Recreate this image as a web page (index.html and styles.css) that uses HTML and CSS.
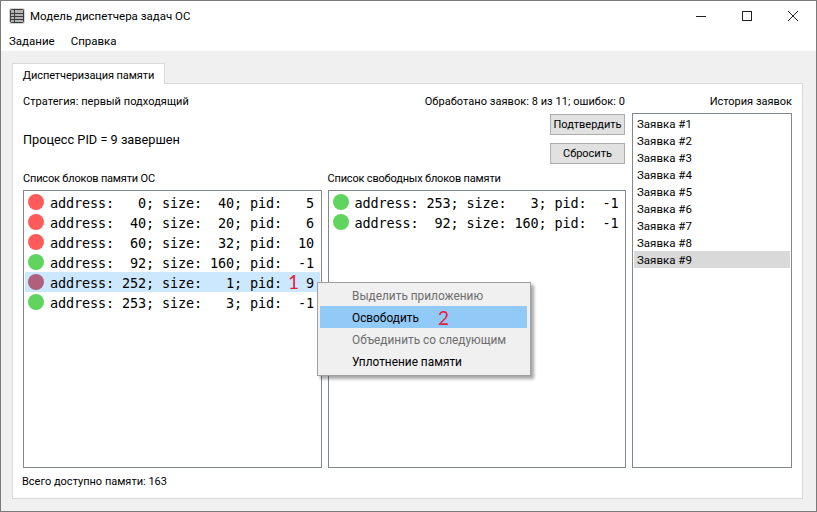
FILE: index.html
```html
<!DOCTYPE html>
<html lang="ru">
<head>
    <meta charset="UTF-8">
    <title>Модель диспетчера задач ОС</title>
    <link rel="stylesheet" href="styles.css">
</head>
<body>
    <div class="window">
        <div class="titlebar">
            <svg class="app-icon" width="16" height="16" viewBox="0 0 16 16">
                <rect x="0" y="0" width="16" height="16" rx="2" fill="#d4d4d4"/>
                <rect x="1.5" y="1.5" width="13" height="13" rx="1" fill="#b4b4b4" stroke="#3c3c3c"/>
                <path d="M2 5.5h12M2 8.5h12M2 11.5h12M5.5 2v12" stroke="#3c3c3c" fill="none"/>
            </svg>
            <span class="title">Модель диспетчера задач ОС</span>
            <div class="controls">
                <div class="control">
                    <svg width="12" height="12" viewBox="0 0 12 12"><path d="M1 6.5h10" stroke="#222" fill="none"/></svg>
                </div>
                <div class="control">
                    <svg width="12" height="12" viewBox="0 0 12 12"><rect x="1.5" y="1.5" width="9" height="9" stroke="#222" fill="none"/></svg>
                </div>
                <div class="control">
                    <svg width="12" height="12" viewBox="0 0 12 12"><path d="M1 1l10 10M11 1L1 11" stroke="#222" fill="none"/></svg>
                </div>
            </div>
        </div>

        <div class="menubar">
            <span class="menu-item">Задание</span>
            <span class="menu-item">Справка</span>
        </div>

        <div class="content">
            <div class="tab">Диспетчеризация памяти</div>
            <div class="pane">
                <div class="main">
                    <div class="left">
                        <div class="label-row">
                            <span>Стратегия: первый подходящий</span>
                            <span>Обработано заявок: 8 из 11; ошибок: 0</span>
                        </div>
                        <div class="message-row">
                            <span class="message">Процесс PID = 9 завершен</span>
                            <div class="buttons">
                                <button class="btn">Подтвердить</button>
                                <button class="btn">Сбросить</button>
                            </div>
                        </div>
                        <div class="lists">
                            <div class="list-col">
                                <div class="list-label">Список блоков памяти ОС</div>
                                <div class="list">
                                    <div class="block"><i class="dot busy"></i><span>address:   0; size:  40; pid:   5</span></div>
                                    <div class="block"><i class="dot busy"></i><span>address:  40; size:  20; pid:   6</span></div>
                                    <div class="block"><i class="dot busy"></i><span>address:  60; size:  32; pid:  10</span></div>
                                    <div class="block"><i class="dot free"></i><span>address:  92; size: 160; pid:  -1</span></div>
                                    <div class="block selected"><i class="dot mixed"></i><span>address: 252; size:   1; pid:   9</span><b class="mark mark-one">1</b></div>
                                    <div class="block"><i class="dot free"></i><span>address: 253; size:   3; pid:  -1</span></div>
                                </div>
                            </div>
                            <div class="list-col">
                                <div class="list-label">Список свободных блоков памяти</div>
                                <div class="list">
                                    <div class="block"><i class="dot free"></i><span>address: 253; size:   3; pid:  -1</span></div>
                                    <div class="block"><i class="dot free"></i><span>address:  92; size: 160; pid:  -1</span></div>
                                </div>
                            </div>
                        </div>
                    </div>
                    <div class="right">
                        <div class="history-label">История заявок</div>
                        <div class="history">
                            <div class="history-item">Заявка #1</div>
                            <div class="history-item">Заявка #2</div>
                            <div class="history-item">Заявка #3</div>
                            <div class="history-item">Заявка #4</div>
                            <div class="history-item">Заявка #5</div>
                            <div class="history-item">Заявка #6</div>
                            <div class="history-item">Заявка #7</div>
                            <div class="history-item">Заявка #8</div>
                            <div class="history-item current">Заявка #9</div>
                        </div>
                    </div>
                </div>
                <div class="footer">Всего доступно памяти: 163</div>

                <!-- context menu over the lists -->
                <div class="context-menu">
                    <div class="context-item disabled">Выделить приложению</div>
                    <div class="context-item active">Освободить<b class="mark mark-two">2</b></div>
                    <div class="context-item disabled">Объединить со следующим</div>
                    <div class="context-item">Уплотнение памяти</div>
                </div>
            </div>
        </div>
    </div>
</body>
</html>
```

FILE: styles.css
```css
* {
    box-sizing: border-box;
}
html, body {
    margin: 0;
    height: 100%;
    overflow: hidden;
}
body {
    font-family: Roboto, "Open Sans", sans-serif;
    font-size: 11px;
    color: #000;
    background-color: #fff;
}
.window {
    height: 512px;
    display: flex;
    flex-direction: column;
    border: 1px solid #7a7a7a;
}
.titlebar {
    height: 29px;
    display: flex;
    align-items: center;
    padding-left: 8px;
    flex-shrink: 0;
}
.title {
    margin-left: 5px;
    font-size: 11.5px;
}
.controls {
    margin-left: auto;
    display: flex;
    align-self: stretch;
}
.control {
    width: 46px;
    display: flex;
    align-items: center;
    justify-content: center;
}
.menubar {
    height: 21px;
    line-height: 23px;
    display: flex;
    padding-left: 8px;
    gap: 16px;
    flex-shrink: 0;
    font-size: 11.5px;
}
.content {
    flex: 1;
    background-color: #f0f0f0;
    padding: 12px 13px 12px 11px;
    display: flex;
    flex-direction: column;
    min-height: 0;
}
.tab {
    width: 153px;
    height: 21px;
    background-color: #fff;
    border: 1px solid #d9d9d9;
    border-bottom: none;
    text-align: center;
    line-height: 23px;
    letter-spacing: -0.1px;
    position: relative;
    z-index: 1;
    margin-bottom: -1px;
}
.pane {
    flex: 1;
    position: relative;
    background-color: #fff;
    border: 1px solid #d9d9d9;
    padding: 9px 10px 0 10px;
    display: flex;
    flex-direction: column;
}
.main {
    display: flex;
    gap: 6px;
    height: 375px;
}
.left {
    width: 603px;
    display: flex;
    flex-direction: column;
}
.label-row {
    height: 16px;
    line-height: 18px;
    display: flex;
    justify-content: space-between;
    padding-right: 1px;
    letter-spacing: 0.05px;
}
.message-row {
    height: 61px;
    display: flex;
    justify-content: space-between;
    padding-right: 1px;
}
.message {
    font-size: 12.75px;
    line-height: 18px;
    margin-top: 22px;
}
.buttons {
    display: flex;
    flex-direction: column;
    gap: 8px;
    padding-top: 5px;
}
.btn {
    width: 75px;
    height: 21px;
    padding: 0;
    font: inherit;
    color: #000;
    background-color: #e1e1e1;
    border: 1px solid #adadad;
}
.lists {
    flex: 1;
    display: flex;
    gap: 6px;
}
.list-col {
    width: 299px;
    display: flex;
    flex-direction: column;
}
.list-label {
    height: 16px;
    line-height: 18px;
    margin-bottom: 4px;
    letter-spacing: -0.18px;
}
.list {
    flex: 1;
    border: 1px solid #828790;
    padding: 1px;
    background-color: #fff;
}
.block {
    height: 20px;
    display: flex;
    align-items: center;
    padding-left: 3px;
    gap: 6px;
    position: relative;
    font-family: "DejaVu Sans Mono", monospace;
    font-size: 13.5px;
    letter-spacing: -0.13px;
    white-space: pre;
}
.block span {
    padding-top: 2px;
}
.selected {
    background-color: #cce8ff;
}
.dot {
    width: 16px;
    height: 16px;
    border-radius: 50%;
    flex-shrink: 0;
}
.busy {
    background-color: #ff5b5b;
}
.free {
    background-color: #5fd55f;
}
.mixed {
    background-color: #b0607a;
}
.mark {
    position: absolute;
    font-family: "Lato", sans-serif;
    font-weight: normal;
    font-size: 19px;
    color: #e8203a;
    letter-spacing: 0;
}
.mark-one {
    left: 263px;
    top: -2px;
}
.mark-two {
    left: 118px;
    top: -1px;
}
.right {
    width: 160px;
    display: flex;
    flex-direction: column;
}
.history-label {
    height: 16px;
    line-height: 18px;
    text-align: right;
    margin-bottom: 4px;
}
.history {
    flex: 1;
    border: 1px solid #828790;
    padding: 1px;
}
.history-item {
    height: 17px;
    line-height: 19px;
    padding-left: 3px;
    font-size: 11.5px;
}
.current {
    background-color: #d9d9d9;
}
.footer {
    margin-top: 6px;
    margin-left: -1px;
    line-height: 16px;
}
.context-menu {
    position: absolute;
    left: 304px;
    top: 198px;
    width: 214px;
    height: 94px;
    background-color: #f0f0f0;
    border: 1px solid #a0a0a0;
    padding: 1px 3px 1px 2px;
    box-shadow: 3px 3px 3px rgba(0, 0, 0, 0.35);
    font-size: 11.85px;
}
.context-item {
    height: 22px;
    line-height: 25px;
    padding-left: 32px;
    position: relative;
}
.disabled {
    color: #6d6d6d;
}
.active {
    background-color: #91c9f7;
}
```
